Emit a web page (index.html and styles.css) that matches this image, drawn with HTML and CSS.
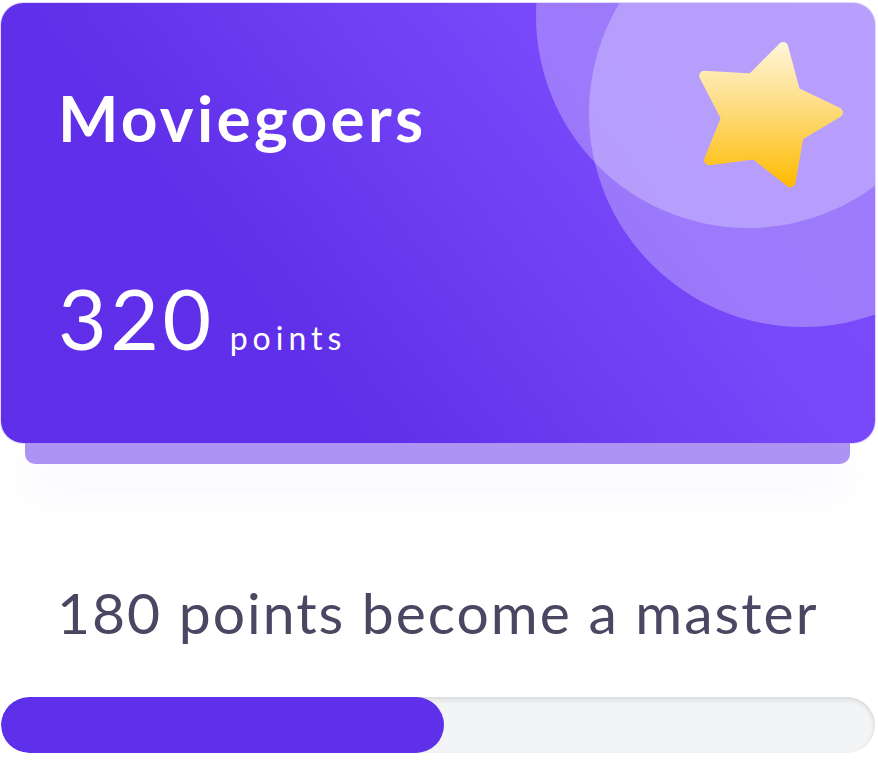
FILE: index.html
```html
<!DOCTYPE html>
<html>
<head>
<meta charset="utf-8">
<link rel="stylesheet" href="styles.css">
</head>
<body>
<div class="page">
  <div class="card-wrap">
    <section class="card">
      <div class="circle circle-a"></div>
      <div class="circle circle-b"></div>
      <svg class="star" viewBox="690 30 170 170" width="170" height="170">
        <defs>
          <linearGradient id="sg" gradientUnits="userSpaceOnUse" x1="0" y1="42" x2="0" y2="187">
            <stop offset="0" stop-color="#fff6da"/>
            <stop offset="0.45" stop-color="#fddc80"/>
            <stop offset="1" stop-color="#ffbb00"/>
          </linearGradient>
        </defs>
        <polygon points="783.1,46.9 795.2,91.9 838,112.4 798.6,135.9 790.5,182.2 754.6,154.3 709.1,160.2 726,118 704.2,75.7 751.7,78.6" fill="url(#sg)" stroke="url(#sg)" stroke-width="10" stroke-linejoin="round"/>
      </svg>
      <h1 class="title">Moviegoers</h1>
      <div class="score"><span class="score-num">320</span><span class="score-unit">points</span></div>
    </section>
    <div class="card-back"></div>
  </div>
  <p class="goal">180 points become a master</p>
  <div class="bar"><div class="bar-fill" style="width:50.7%"></div></div>
</div>
</body>
</html>
```
FILE: styles.css
```css
html, body {
  margin: 0;
  padding: 0;
  background: #ffffff;
}
body {
  font-family: Lato, "Open Sans", sans-serif;
}
.page {
  width: 874px;
  padding: 3px 0 0 1px;
}
.card-wrap {
  position: relative;
}
.card {
  position: relative;
  height: 440px;
  box-sizing: border-box;
  border-radius: 22px;
  overflow: hidden;
  padding: 83px 57px 0;
  display: flex;
  flex-direction: column;
  background: linear-gradient(52deg, #5e2ee9 0%, #5f2fe9 30%, #7849fa 70%, #7a4cfb 100%);
  box-shadow: 0 0 0 1px rgba(170, 145, 250, 0.35);
  z-index: 1;
}
.circle {
  position: absolute;
  border-radius: 50%;
  background: rgba(255, 255, 255, 0.27);
}
.circle-a {
  width: 424px;
  height: 424px;
  left: 535px;
  top: -199px;
}
.circle-b {
  width: 428px;
  height: 428px;
  left: 588px;
  top: -104px;
}
.star {
  position: absolute;
  left: 689px;
  top: 27px;
}
.title {
  position: relative;
  margin: 0;
  font-size: 64px;
  line-height: 64px;
  font-weight: 700;
  color: #ffffff;
  letter-spacing: 3.3px;
}
.score {
  position: relative;
  margin-top: 128px;
  display: flex;
  align-items: baseline;
  color: #ffffff;
}
.score-num {
  font-size: 84px;
  line-height: 80px;
  font-weight: 400;
  letter-spacing: 3.5px;
}
.score-unit {
  margin-left: 15px;
  font-size: 32px;
  letter-spacing: 5px;
}
.card-back {
  height: 21px;
  margin: 0 25px 0 24px;
  border-radius: 0 0 10px 10px;
  background: #ad94f4;
  box-shadow: 0 22px 40px -6px rgba(120, 80, 240, 0.16);
}
.goal {
  margin: 116px 0 0 56px;
  font-size: 57px;
  line-height: 64px;
  color: #4b4662;
  letter-spacing: 2px;
}
.bar {
  margin-top: 53px;
  height: 56px;
  border-radius: 28px;
  background: #f3f4f6;
  box-shadow: inset 0 5px 6px -3px rgba(0, 0, 0, 0.12), inset -3px 0 4px -2px rgba(0, 0, 0, 0.08);
  overflow: hidden;
}
.bar-fill {
  height: 100%;
  border-radius: 28px;
  background: #5f30e9;
}
```
